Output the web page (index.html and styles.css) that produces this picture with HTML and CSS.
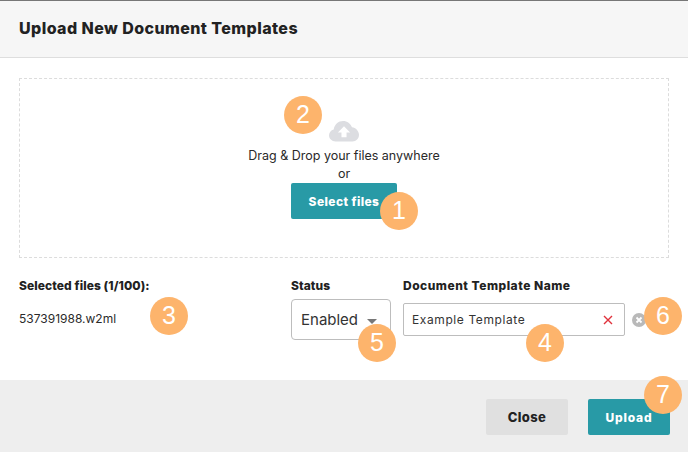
FILE: index.html
```html
<!DOCTYPE html>
<html lang="en">
<head>
<meta charset="utf-8">
<title>Upload New Document Templates</title>
<link rel="stylesheet" href="styles.css">
</head>
<body>
<div class="modal">
  <header class="head"><h1>Upload New Document Templates</h1></header>
  <main class="content">
    <section class="drop">
      <svg class="cloud" width="30" height="21" viewBox="0 0 32 22" preserveAspectRatio="none" aria-hidden="true">
        <path fill="#dcdde1" d="M7 21.500C3 21.500 0 18.500 0 15C0 12 2 9.500 5 8.800C6 3.500 10 0 15 0C19.500 0 23 2.700 24.500 6.500C28.500 7 32 10.500 32 14.500C32 18.500 29 21.500 25 21.500Z"/>
        <path fill="#fff" d="M16 5.500L22.500 12H18.700V17H13.300V12H9.500Z"/>
      </svg>
      <p class="dtext">Drag &amp; Drop your files anywhere</p>
      <p class="dtext">or</p>
      <button class="btn teal select">Select files</button>
    </section>
    <section class="fields">
      <div class="col files">
        <div class="label">Selected files (1/100):</div>
        <div class="fname">537391988.w2ml</div>
      </div>
      <div class="col status">
        <div class="label">Status</div>
        <div class="select-box"><span>Enabled</span><i class="caret"></i></div>
      </div>
      <div class="col name">
        <div class="label wide">Document Template Name</div>
        <div class="name-row">
          <div class="input"><span>Example Template</span>
            <svg width="10" height="10" viewBox="0 0 10 10" aria-hidden="true"><path d="M1 1L9 9M9 1L1 9" stroke="#e0323c" stroke-width="1.400"/></svg>
          </div>
          <svg class="remove" width="14" height="14" viewBox="0 0 14 14" aria-hidden="true"><circle cx="7" cy="7" r="7" fill="#b9b9b9"/><path d="M4.500 4.500L9.500 9.500M9.500 4.500L4.500 9.500" stroke="#fff" stroke-width="1.800"/></svg>
        </div>
      </div>
    </section>
  </main>
  <footer class="foot">
    <button class="btn gray">Close</button>
    <button class="btn teal">Upload</button>
  </footer>
</div>
<span class="badge b1">1</span>
<span class="badge b2">2</span>
<span class="badge b3">3</span>
<span class="badge b4">4</span>
<span class="badge b5">5</span>
<span class="badge b6">6</span>
<span class="badge b7">7</span>
</body>
</html>
```

FILE: styles.css
```css
* { box-sizing: border-box; }
html, body { margin: 0; height: 100%; }
body {
  position: relative;
  width: 688px;
  height: 452px;
  overflow: hidden;
  background: #fff;
  color: #222;
  font-family: Inter, "Open Sans", sans-serif;
}
.modal { display: flex; flex-direction: column; height: 452px; border-top: 1px solid #777; }
.head {
  height: 57px;
  flex: none;
  display: flex;
  align-items: center;
  padding: 0 19px;
  background: #f6f6f6;
  border-bottom: 1px solid #dedede;
}
h1 { margin: 0 0 2px; font-size: 16px; font-weight: 800; color: #222; letter-spacing: 0.42px; }
.content { flex: 1; padding: 20px 19px 0 19px; }
.drop {
  height: 180px;
  border: 1px dashed #dcdcdc;
  display: flex;
  flex-direction: column;
  align-items: center;
  padding-top: 42px;
}
.cloud { margin-bottom: 5px; }
.dtext { margin: 0; font-size: 12.500px; line-height: 18px; color: #2a2a2a; }
.select { margin-top: 0; width: 106px; height: 36px; }
.btn {
  border: 0;
  border-radius: 2px;
  font-family: inherit;
  font-size: 12px;
  font-weight: 800;
  letter-spacing: 0.4px;
  padding: 0;
}
.teal { background: #289aa6; color: #fff; }
.gray { background: #e0e0e0; color: #222; font-size: 13px; }
.foot .teal { letter-spacing: 0.8px; }
.fields { display: flex; margin-top: 20px; }
.label { font-size: 12px; font-weight: 800; line-height: 16px; color: #222; letter-spacing: 0.08px; }
.label.wide { letter-spacing: 0.5px; }
.files { width: 272px; }
.fname { margin-top: 17px; font-size: 12px; line-height: 16px; color: #2a2a2a; }
.status { width: 112px; }
.select-box {
  margin-top: 5px;
  width: 100px;
  height: 41px;
  border: 1px solid #bdbdbd;
  border-radius: 4px;
  display: flex;
  align-items: center;
  gap: 9px;
  padding: 0 0 0 9px;
  font-size: 15px;
  color: #333;
}
.caret {
  width: 0;
  height: 0;
  margin-top: 3px;
  border-left: 5px solid transparent;
  border-right: 5px solid transparent;
  border-top: 5px solid #777;
}
.name-row { display: flex; align-items: center; gap: 7px; margin-top: 9px; }
.input {
  width: 222px;
  height: 33px;
  border: 1px solid #bdbdbd;
  border-radius: 2px;
  display: flex;
  align-items: center;
  justify-content: space-between;
  padding: 0 11px 0 8px;
  font-size: 12px;
  color: #333;
  letter-spacing: 0.6px;
}
.foot {
  height: 72px;
  flex: none;
  display: flex;
  justify-content: flex-end;
  gap: 20px;
  padding: 19px 18px 0 0;
  background: #eee;
}
.foot .btn { width: 82px; height: 36px; }
.badge {
  position: absolute;
  width: 38px;
  height: 38px;
  border-radius: 50%;
  background: #fdb46c;
  color: #fff;
  font-family: "Liberation Sans", Arial, sans-serif;
  font-size: 25px;
  line-height: 36px;
  text-align: center;
}
.b1 { left: 380px; top: 192px; }
.b2 { left: 284px; top: 96px; }
.b3 { left: 150px; top: 297px; }
.b4 { left: 526px; top: 324px; }
.b5 { left: 358px; top: 324px; }
.b6 { left: 644px; top: 297px; }
.b7 { left: 644px; top: 376px; }
```
